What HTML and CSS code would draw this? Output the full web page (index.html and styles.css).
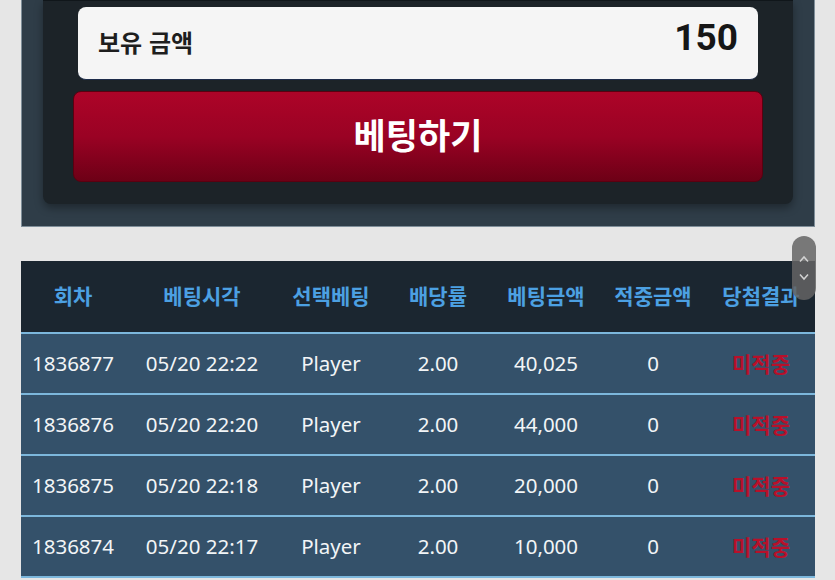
FILE: index.html
```html
<!DOCTYPE html>
<html lang="ko">
<head>
  <meta charset="UTF-8">
  <title>베팅</title>
  <meta name="viewport" content="width=device-width, initial-scale=1.0">
  <link rel="stylesheet" href="styles.css">
</head>
<body>
  <div class="bet-panel">
    <div class="bet-inner">
      <div class="balance">
        <span class="balance-label">보유 금액</span>
        <span class="balance-value">150</span>
      </div>
      <button class="bet-btn">베팅하기</button>
    </div>
  </div>

  <div class="history">
    <table class="history-table">
      <colgroup>
        <col style="width:104px"><col style="width:154px"><col style="width:104px"><col style="width:110px"><col style="width:106px"><col style="width:108px"><col>
      </colgroup>
      <thead>
        <tr>
          <th>회차</th>
          <th>베팅시각</th>
          <th>선택베팅</th>
          <th>배당률</th>
          <th>베팅금액</th>
          <th>적중금액</th>
          <th>당첨결과</th>
        </tr>
      </thead>
      <tbody>
        <tr>
          <td>1836877</td><td>05/20 22:22</td><td>Player</td><td>2.00</td><td>40,025</td><td>0</td><td class="lose">미적중</td>
        </tr>
        <tr>
          <td>1836876</td><td>05/20 22:20</td><td>Player</td><td>2.00</td><td>44,000</td><td>0</td><td class="lose">미적중</td>
        </tr>
        <tr>
          <td>1836875</td><td>05/20 22:18</td><td>Player</td><td>2.00</td><td>20,000</td><td>0</td><td class="lose">미적중</td>
        </tr>
        <tr>
          <td>1836874</td><td>05/20 22:17</td><td>Player</td><td>2.00</td><td>10,000</td><td>0</td><td class="lose">미적중</td>
        </tr>
      </tbody>
    </table>
  </div>

  <div class="scroll-pill">
    <svg width="12" height="8" viewBox="0 0 12 8"><path d="M2 6.5 L6 2 L10 6.5" fill="none" stroke="#d2d2d2" stroke-width="1.5"/></svg>
    <svg width="12" height="8" viewBox="0 0 12 8"><path d="M2 1.5 L6 6 L10 1.5" fill="none" stroke="#d2d2d2" stroke-width="1.5"/></svg>
  </div>
</body>
</html>
```
FILE: styles.css
```css
* {
  box-sizing: border-box;
}

body {
  margin: 0;
  padding: 0;
  background: #e6e6e6;
  font-family: 'Noto Sans', 'Noto Sans CJK KR', sans-serif;
  height: 580px;
  overflow: hidden;
  position: relative;
}

.bet-panel {
  margin: 0 20px 0 21px;
  background: #2f3d48;
  border: 1px solid #7f8e99;
  border-top: none;
  padding: 0 21px 22px 21px;
}

.bet-inner {
  background: #1c2328;
  border-radius: 0 0 8px 8px;
  box-shadow: 0 4px 8px rgba(0, 0, 0, 0.35);
  padding: 6px 30px 22px 30px;
  border-top: 1px solid #10161a;
}

.balance {
  margin: 0 5px;
  height: 73px;
  background: #f5f5f5;
  border-radius: 8px;
  border-bottom: 1px solid #1d2c4a;
  display: flex;
  align-items: center;
  justify-content: space-between;
  padding: 0 20px 0 20px;
}

.balance-label {
  font-family: 'Noto Sans CJK KR', sans-serif;
  font-weight: 700;
  font-size: 24px;
  color: #1e1e1e;
  margin-bottom: 3px;
}

.balance-value {
  font-family: Roboto, sans-serif;
  font-weight: 700;
  font-size: 37px;
  color: #161616;
  margin-bottom: 12px;
}

.bet-btn {
  display: block;
  width: 100%;
  height: 91px;
  margin-top: 11px;
  border: 1px solid #5a0010;
  border-radius: 8px;
  background: linear-gradient(to bottom, #ad0428 0%, #9a0224 50%, #6d0016 100%);
  color: #ffffff;
  font-family: 'Noto Sans CJK KR', sans-serif;
  font-weight: 700;
  font-size: 35px;
  padding: 0;
  padding-bottom: 7px;
  cursor: pointer;
}

.history {
  margin: 34px 20px 0 21px;
}

.history-table {
  width: 794px;
  border-collapse: collapse;
  table-layout: fixed;
}

.history-table th {
  background: #1b2630;
  color: #4ca0e2;
  font-family: 'Noto Sans CJK KR', sans-serif;
  font-weight: 700;
  font-size: 21px;
  height: 72px;
  padding: 0 0 3px 0;
  white-space: nowrap;
  border-bottom: 2px solid #7cb7dc;
}

.history-table td {
  background: #34516a;
  color: #f2f5f7;
  font-size: 20.5px;
  text-align: center;
  height: 61px;
  padding: 0 0 1px 0;
  border-bottom: 2px solid #7cb7dc;
  white-space: nowrap;
}

.history-table td.lose {
  color: #b8102a;
  font-family: 'Noto Sans CJK KR', sans-serif;
  font-weight: 700;
  font-size: 21px;
}

.scroll-pill {
  position: absolute;
  left: 792px;
  top: 236px;
  width: 24px;
  height: 64px;
  border-radius: 12px;
  background: rgba(100, 100, 100, 0.85);
  display: flex;
  flex-direction: column;
  align-items: center;
  justify-content: center;
  gap: 10px;
}
```
